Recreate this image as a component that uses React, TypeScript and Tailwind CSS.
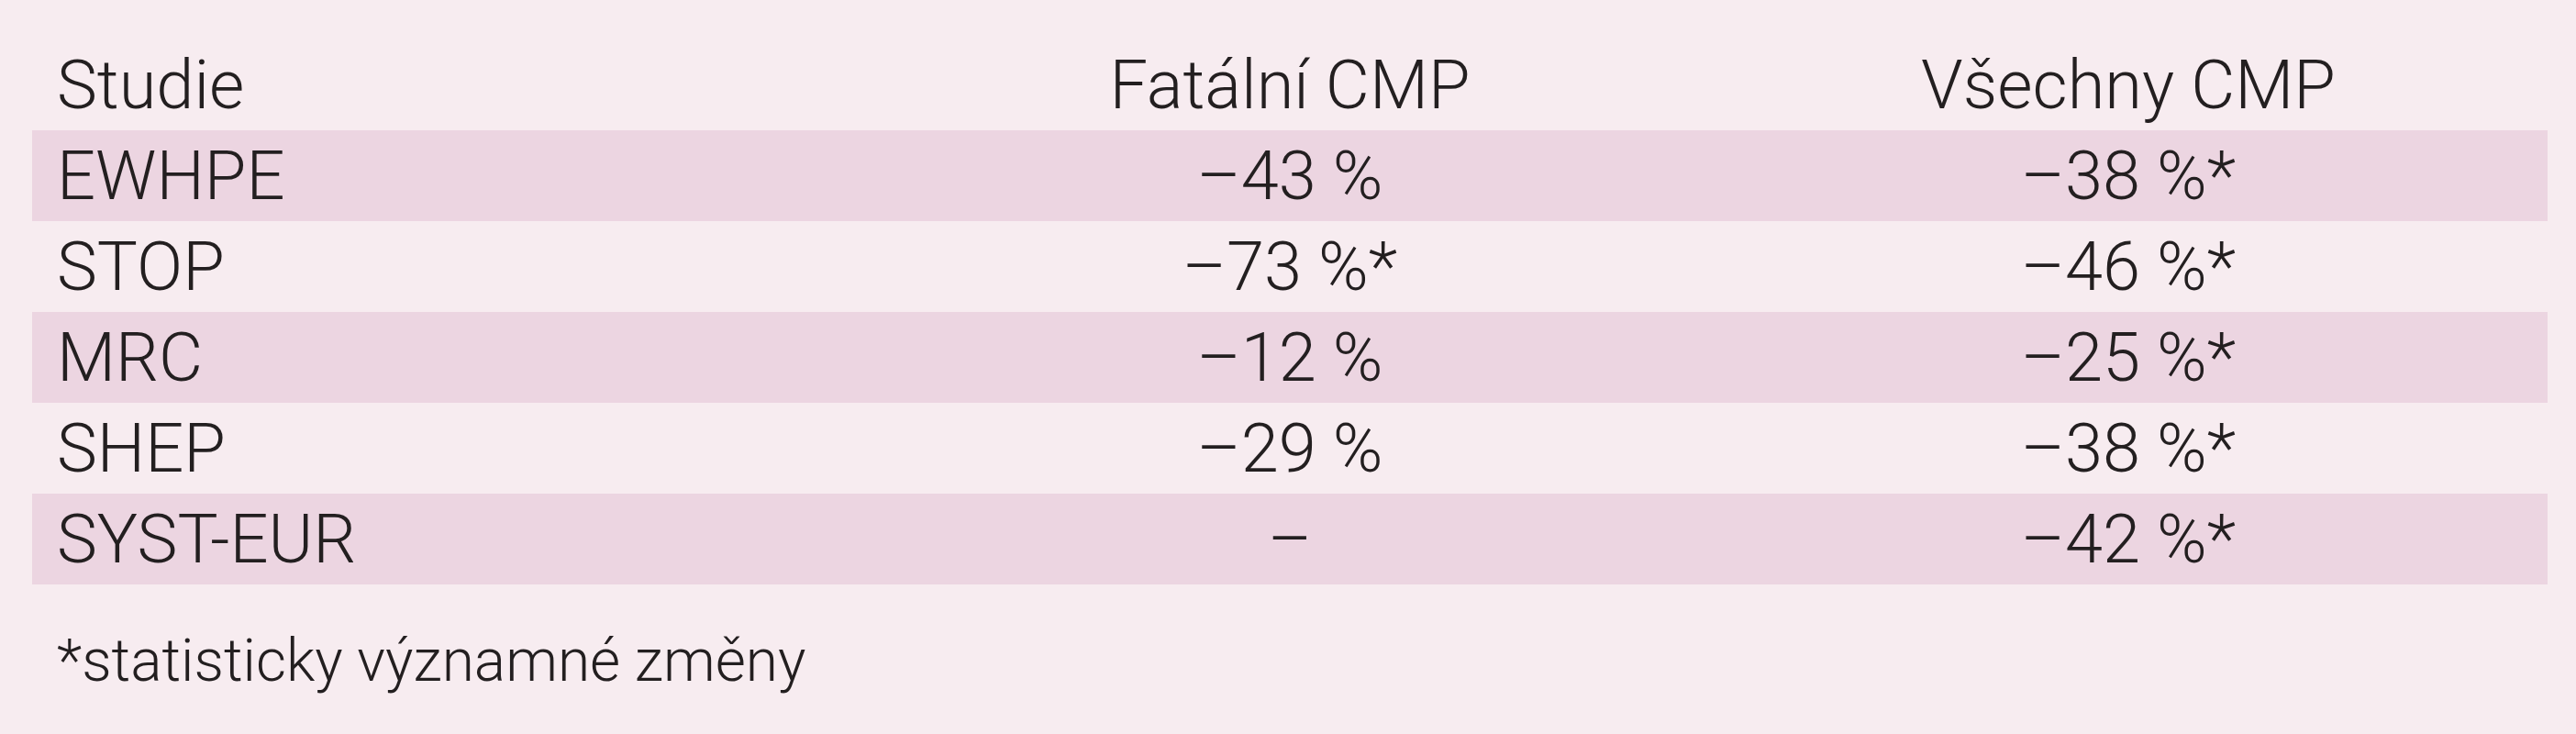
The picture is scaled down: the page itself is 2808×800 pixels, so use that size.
import React from "react";

const rows: { name: string; fatal: string; all: string }[] = [
  { name: "EWHPE", fatal: "–43 %", all: "–38 %*" },
  { name: "STOP", fatal: "–73 %*", all: "–46 %*" },
  { name: "MRC", fatal: "–12 %", all: "–25 %*" },
  { name: "SHEP", fatal: "–29 %", all: "–38 %*" },
  { name: "SYST-EUR", fatal: "–", all: "–42 %*" },
];

export default function App() {
  return (
    <div
      className="w-[2808px] h-[800px] bg-[#f7ecf0] text-[#231f20] font-light"
      style={{ fontFamily: "Roboto, 'Liberation Sans', sans-serif" }}
    >
      <div className="pl-[35px] pr-[31px] pt-[43px] text-[74px]">
        <div className="grid grid-cols-3 h-[99px] leading-[99px]">
          <div className="pl-[27px]">Studie</div>
          <div className="text-center">Fatální CMP</div>
          <div className="text-center">Všechny CMP</div>
        </div>
        {rows.map((r, i) => (
          <div
            key={r.name}
            className={
              i % 2 === 0
                ? "grid grid-cols-3 h-[99px] leading-[99px] bg-[#ecd5e1]"
                : "grid grid-cols-3 h-[99px] leading-[99px]"
            }
          >
            <div className="pl-[27px]">{r.name}</div>
            <div className="text-center">{r.fatal}</div>
            <div className="text-center">{r.all}</div>
          </div>
        ))}
      </div>
      <div className="pl-[62px] mt-[44px] text-[64px] leading-[80px]">
        *statisticky významné změny
      </div>
    </div>
  );
}
